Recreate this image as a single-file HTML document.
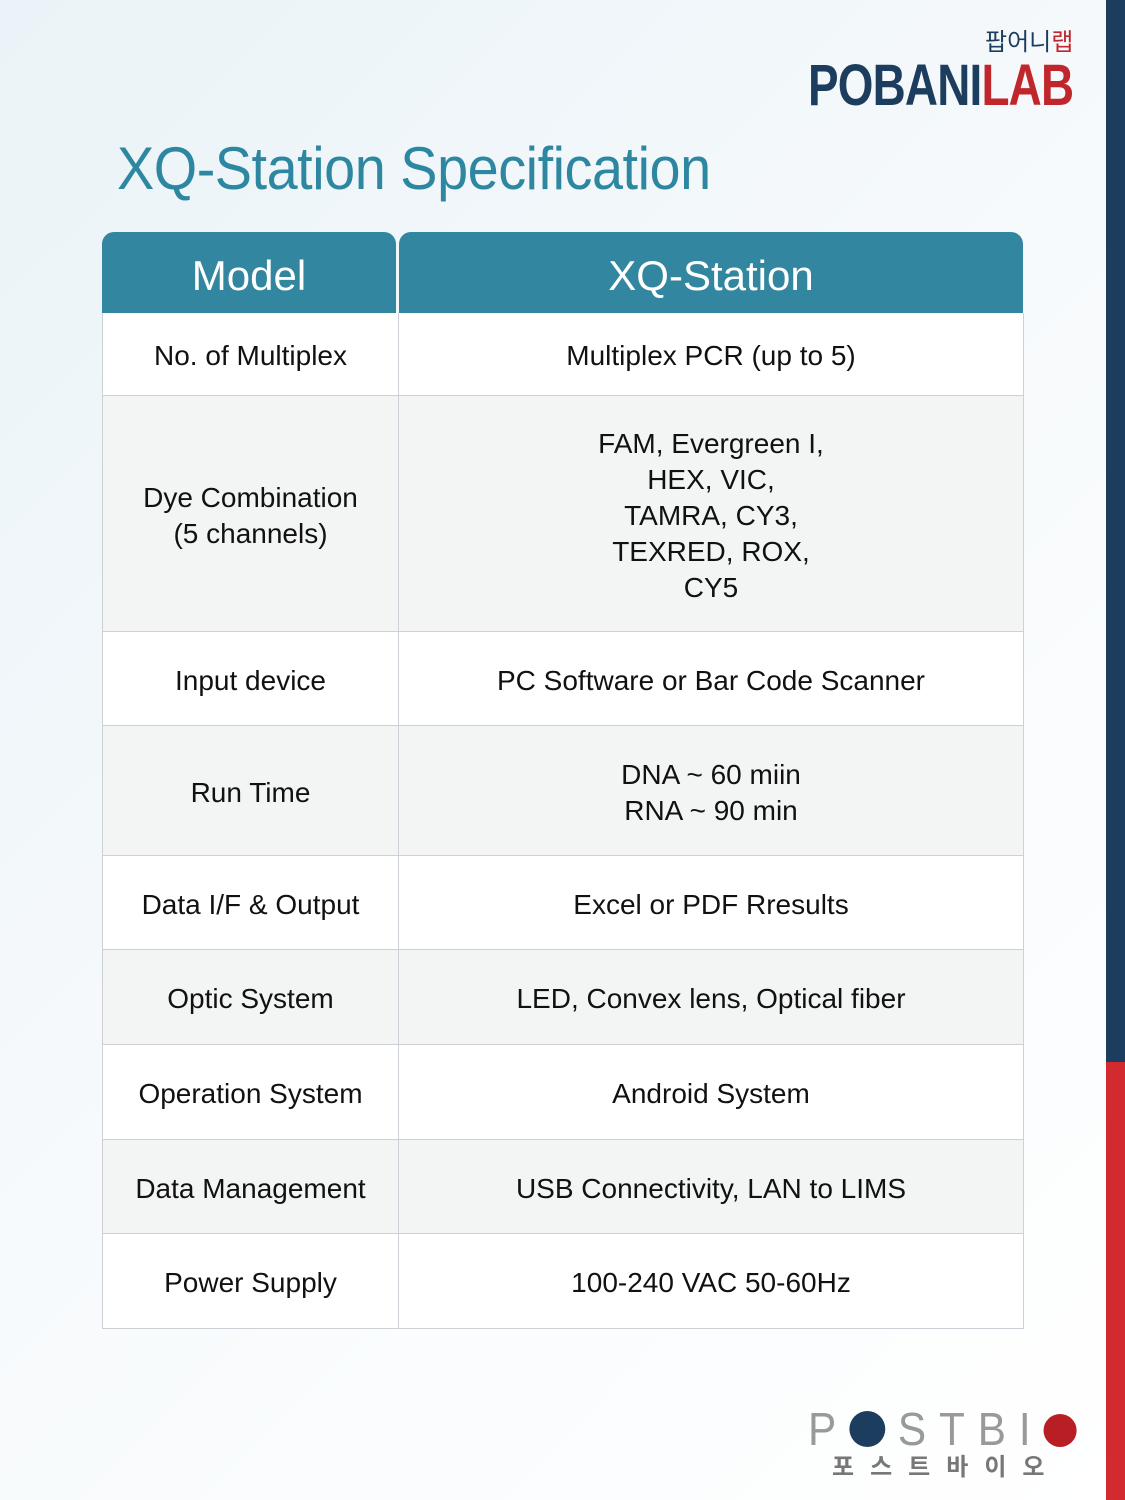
<!DOCTYPE html>
<html><head><meta charset="utf-8"><style>
body{margin:0;width:1125px;height:1500px;position:relative;overflow:hidden;font-family:"Liberation Sans","Noto Sans CJK KR",sans-serif;background:linear-gradient(135deg,#eaf3f7 0%,#f7fafc 50%,#ffffff 100%)}
.bar1{position:absolute;left:1106px;top:0;width:19px;height:1062px;background:#1c3d5e}
.bar2{position:absolute;left:1106px;top:1062px;width:19px;height:438px;background:#d22a2f}
h1{position:absolute;left:117px;top:134px;margin:0;font-weight:normal;font-size:60px;color:#2e87a0;letter-spacing:-0.5px;transform:scaleX(0.93);transform-origin:left top;white-space:nowrap}
.hd{position:absolute;top:232px;height:81px;background:#33869f;color:#fff;font-size:42px;display:flex;align-items:center;justify-content:center;border-radius:12px 12px 0 0;padding-top:6px;box-sizing:border-box}
.row{position:absolute;left:102px;width:920px;border:1px solid #cdd0d6;border-top:none;display:flex;font-size:28px;color:#111}
.row div{display:flex;align-items:center;justify-content:center;text-align:center;line-height:36px;padding-top:4px}
.c1{width:295px;border-right:1px solid #cdd0d6}
.c2{flex:1}
.g{background:#f3f4f4}.w{background:#fff}
</style></head><body>
<div class="bar1"></div><div class="bar2"></div>
<div style="position:absolute;left:985px;top:22px;font-size:24px;color:#1c3d5e;font-family:'Noto Sans CJK KR',sans-serif">팝어니<span style="color:#c0272d">랩</span></div>
<div style="position:absolute;left:808px;top:52px;font-size:58px;font-weight:bold;color:#1c3d5e;letter-spacing:-1px;transform:scaleX(0.79);transform-origin:left top;white-space:nowrap">POBANI<span style="color:#c0272d">LAB</span></div>
<h1>XQ-Station Specification</h1>
<div class="hd" style="left:102px;width:294px">Model</div>
<div class="hd" style="left:399px;width:624px">XQ-Station</div>
<div class="row w" style="top:313px;height:82px"><div class="c1">No. of Multiplex</div><div class="c2">Multiplex PCR (up to 5)</div></div>
<div class="row g" style="top:396px;height:235px"><div class="c1">Dye Combination<br>(5 channels)</div><div class="c2">FAM, Evergreen I,<br>HEX, VIC,<br>TAMRA, CY3,<br>TEXRED, ROX,<br>CY5</div></div>
<div class="row w" style="top:632px;height:93px"><div class="c1">Input device</div><div class="c2">PC Software or Bar Code Scanner</div></div>
<div class="row g" style="top:726px;height:129px"><div class="c1">Run Time</div><div class="c2">DNA ~ 60 miin<br>RNA ~ 90 min</div></div>
<div class="row w" style="top:856px;height:93px"><div class="c1">Data I/F &amp; Output</div><div class="c2">Excel or PDF Rresults</div></div>
<div class="row g" style="top:950px;height:94px"><div class="c1">Optic System</div><div class="c2">LED, Convex lens, Optical fiber</div></div>
<div class="row w" style="top:1045px;height:94px"><div class="c1">Operation System</div><div class="c2">Android System</div></div>
<div class="row g" style="top:1140px;height:93px"><div class="c1">Data Management</div><div class="c2">USB Connectivity, LAN to LIMS</div></div>
<div class="row w" style="top:1234px;height:94px"><div class="c1">Power Supply</div><div class="c2">100-240 VAC 50-60Hz</div></div>
<div style="position:absolute;left:808px;top:1402px;font-size:46px;color:#999;letter-spacing:14px;transform:scaleX(0.92);transform-origin:left top;white-space:nowrap">P<span style="display:inline-block;width:39px;height:36px;border-radius:50%;background:#1c3d5e;vertical-align:-2px;margin-right:14px"></span>STBI<span style="display:inline-block;width:36px;height:33px;border-radius:50%;background:#b81f25;vertical-align:-2px"></span></div>
<div style="position:absolute;left:832px;top:1447px;font-size:24px;font-weight:bold;color:#777;letter-spacing:16px;font-family:'Noto Sans CJK KR',sans-serif;white-space:nowrap">포스트바이오</div>
</body></html>
